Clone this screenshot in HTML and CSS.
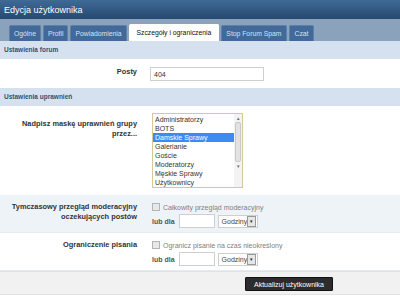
FILE: index.html
```html
<!DOCTYPE html>
<html lang="pl">

<head>
    <meta charset="UTF-8">
    <meta name="viewport" content="width=device-width, initial-scale=1.0">
    <title>Edycja użytkownika</title>
    <link rel="stylesheet" href="styles.css">
</head>

<body>

    <section id="panel">
        <h1 class="header">Edycja użytkownika</h1>

        <nav class="tabs">
            <a class="tab">Ogólne</a>
            <a class="tab">Profil</a>
            <a class="tab">Powiadomienia</a>
            <a class="tab active">Szczegóły i ograniczenia</a>
            <a class="tab">Stop Forum Spam</a>
            <a class="tab">Czat</a>
        </nav>

        <h2 class="section_title">Ustawienia forum</h2>
        <div class="row row_posts">
            <div class="label">Posty</div>
            <div class="value">
                <div class="textbox wide">404</div>
            </div>
        </div>

        <h2 class="section_title">Ustawienia uprawnień</h2>
        <div class="row row_mask">
            <div class="label">Nadpisz maskę uprawnień grupy przez...</div>
            <div class="value">
                <div class="listbox">
                    <ul class="options">
                        <li>Administratorzy</li>
                        <li>BOTS</li>
                        <li class="selected">Damskie Sprawy</li>
                        <li>Galerianie</li>
                        <li>Goście</li>
                        <li>Moderatorzy</li>
                        <li>Męskie Sprawy</li>
                        <li>Użytkownicy</li>
                    </ul>
                    <div class="scrollbar">
                        <span class="arrow">&#9652;</span>
                        <span class="thumb"></span>
                        <span class="arrow">&#9662;</span>
                    </div>
                </div>
            </div>
        </div>

        <div class="row row_alt">
            <div class="label">Tymczasowy przegląd moderacyjny oczekujących postów</div>
            <div class="value">
                <label class="check"><span class="box"></span>Całkowity przegląd moderacyjny</label>
                <div class="duration">
                    <b>lub dla</b>
                    <div class="textbox small"></div>
                    <div class="dropdown">Godziny<span class="drop_btn">&#9662;</span></div>
                </div>
            </div>
        </div>

        <div class="row">
            <div class="label">Ograniczenie pisania</div>
            <div class="value">
                <label class="check"><span class="box"></span>Ogranicz pisanie na czas nieokreślony</label>
                <div class="duration">
                    <b>lub dla</b>
                    <div class="textbox small"></div>
                    <div class="dropdown">Godziny<span class="drop_btn">&#9662;</span></div>
                </div>
            </div>
        </div>

        <div class="footer">
            <button class="submit">Aktualizuj użytkownika</button>
        </div>
    </section>

</body>

</html>
```

FILE: styles.css
```css
body {
    margin: 0;
    font-family: 'Liberation Sans', Arial, sans-serif;
    font-size: 7px;
    color: #333;
    background-color: #fff;
}

#panel {
    width: 400px;
    height: 297px;
    overflow: hidden;
}

.header {
    margin: 0;
    height: 19px;
    padding-left: 4px;
    font-size: 9px;
    font-weight: normal;
    line-height: 21px;
    color: #fff;
    background: linear-gradient(#3f6a96, #26496f);
}

.tabs {
    display: flex;
    gap: 2px;
    height: 22px;
    padding-left: 9px;
    align-items: flex-end;
    background-color: #8ba2bd;
}

.tab {
    height: 15px;
    padding: 0 4px;
    font-size: 6.8px;
    line-height: 16px;
    color: #d6e2f0;
    background-color: #41699a;
    border: 1px solid #5c80aa;
    border-bottom: none;
    border-radius: 2px 2px 0 0;
}

.tab.active {
    padding: 0 7px;
    color: #111;
    background-color: #fff;
    border-color: #fff;
    height: 16px;
}

.tab:last-child {
    padding: 0 5px;
}

.section_title {
    margin: 0;
    height: 18px;
    padding-left: 4px;
    font-size: 6.5px;
    line-height: 18px;
    color: #2f5178;
    background-color: #d5e1ee;
}

.row {
    display: flex;
    border-bottom: 1px solid #e6ebf0;
}

.row_posts {
    height: 29px;
    align-items: center;
    border-bottom: none;
}

.row_mask {
    height: 89px;
    padding-top: 7px;
    box-sizing: border-box;
    border-bottom: none;
}

.row_alt {
    background-color: #eef3f8;
}

.row_alt,
.row_alt + .row {
    height: 38px;
    padding-top: 7px;
    box-sizing: border-box;
}

.label {
    width: 137px;
    flex-shrink: 0;
    text-align: right;
    font-weight: bold;
    font-size: 7.4px;
    line-height: 10px;
    color: #333;
}

.row_mask .label {
    padding-top: 6px;
    padding-left: 16px;
    box-sizing: border-box;
}

.row_posts .label {
    margin-top: -4px;
}

.value {
    padding-left: 13px;
}

.textbox {
    box-sizing: border-box;
    height: 14px;
    padding-left: 3px;
    line-height: 13px;
    font-size: 7px;
    color: #333;
    background-color: #fff;
    border: 1px solid #cfcfcf;
}

.textbox.wide {
    width: 114px;
}

.textbox.small {
    width: 36px;
}

.listbox {
    display: flex;
    width: 91px;
    height: 75px;
    margin-left: 2px;
    box-sizing: border-box;
    border: 1px solid #d9c79c;
    background-color: #fff;
}

.options {
    flex: 1;
    margin: 0;
    padding: 1px 0 0;
    list-style: none;
}

.options li {
    height: 9px;
    padding-left: 2px;
    line-height: 9px;
    font-size: 7px;
    color: #333;
    white-space: nowrap;
    overflow: hidden;
}

.options li.selected {
    color: #fff;
    background-color: #3b8cf0;
}

.scrollbar {
    display: flex;
    flex-direction: column;
    align-items: center;
    width: 8px;
    background-color: #f3f3f3;
}

.arrow {
    height: 8px;
    font-size: 5px;
    line-height: 8px;
    color: #666;
}

.thumb {
    width: 6px;
    height: 40px;
    border: 1px solid #c8c8c8;
    border-radius: 2px;
    box-sizing: border-box;
    background-color: #e2e2e2;
}

.check {
    display: flex;
    align-items: center;
    gap: 3px;
    height: 10px;
    margin-left: 2px;
    font-size: 7px;
    color: #808080;
}

.box {
    width: 6px;
    height: 6px;
    border: 1px solid #b4b4b4;
    background-color: #e8e8e8;
}

.duration {
    display: flex;
    align-items: center;
    gap: 3px;
    margin-left: 2px;
    margin-top: 2px;
}

.duration b {
    font-size: 7px;
    color: #555;
    margin-right: 1px;
}

.dropdown {
    display: flex;
    align-items: center;
    justify-content: space-between;
    box-sizing: border-box;
    width: 40px;
    height: 13px;
    padding-left: 3px;
    font-size: 7px;
    color: #444;
    border: 1px solid #cfcfcf;
    background-color: #fff;
}

.drop_btn {
    width: 7px;
    height: 9px;
    margin-right: 1px;
    font-size: 5px;
    line-height: 9px;
    text-align: center;
    color: #222;
    border: 1px solid #999;
    background-color: #e6e6e6;
}

.footer {
    display: flex;
    justify-content: center;
    height: 24px;
    padding-top: 5px;
    padding-left: 178px;
    box-sizing: border-box;
    background-color: #f1f1f1;
    border-top: 1px solid #e2e2e2;
    border-bottom: 1px solid #e2e2e2;
}

.submit {
    height: 14px;
    width: 88px;
    padding: 0;
    font-family: 'Liberation Sans', Arial, sans-serif;
    font-size: 7px;
    color: #fff;
    background-color: #2c2c2c;
    border: 1px solid #111;
    border-radius: 1px;
}
```
